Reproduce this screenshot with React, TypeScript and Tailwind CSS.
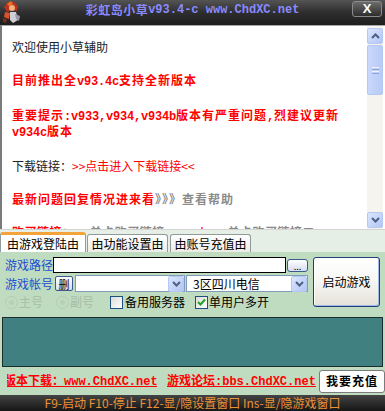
import React from "react";

function M({ children }: { children: React.ReactNode }) {
  return <span className="font-['Liberation_Mono',monospace] tracking-[-0.2px]">{children}</span>;
}

function Chevron({ up = false }: { up?: boolean }) {
  return (
    <svg width="9" height="6" viewBox="0 0 9 6">
      <path
        d={up ? "M1 5 L4.5 1.5 L8 5" : "M1 1 L4.5 4.5 L8 1"}
        fill="none"
        stroke="#4d6185"
        strokeWidth="2"
      />
    </svg>
  );
}

function XpArrowBtn({ up = false, cls = "" }: { up?: boolean; cls?: string }) {
  return (
    <div
      className={
        "w-[16px] h-[16px] rounded-[2px] border border-[#b5c8f3] bg-linear-to-br from-[#dbe5fd] to-[#b3c7f4] flex items-center justify-center " +
        cls
      }
    >
      <Chevron up={up} />
    </div>
  );
}

function Icon() {
  return (
    <svg width="22" height="24" viewBox="0 0 22 24">
      <path d="M3 7 L7 2 L13 2 L17 6 L16 11 L11 10 L6 12 Z" fill="#b8321e" />
      <path d="M6 4 L10 1 L12 4 L8 6 Z" fill="#e8702a" />
      <circle cx="11" cy="8" r="3" fill="#f3b07a" />
      <path d="M4 12 L9 13 L8 19 L3 17 Z" fill="#d9522a" />
      <path d="M9 12 L15 12 L17 20 L12 23 L9 20 Z" fill="#cfcfd8" />
      <path d="M14 14 L19 16 L18 21 L15 19 Z" fill="#9a9aa8" />
      <path d="M2 18 L6 19 L5 23 L2 22 Z" fill="#7a2a1a" />
    </svg>
  );
}

function CheckBox({ checked = false }: { checked?: boolean }) {
  return (
    <div className="w-[13px] h-[13px] border border-[#1c5180] bg-linear-to-br from-[#dcdcd7] to-white flex items-center justify-center">
      {checked && (
        <svg width="9" height="9" viewBox="0 0 9 9">
          <path d="M1 4 L3.5 6.5 L8 1.5" fill="none" stroke="#21a121" strokeWidth="2" />
        </svg>
      )}
    </div>
  );
}

function Radio() {
  return (
    <div className="w-[13px] h-[13px] rounded-full border border-[#b3ccb3] flex items-center justify-center">
      <div className="w-[5px] h-[5px] rounded-full bg-[#b8ceb8]" />
    </div>
  );
}

function Combo({ w, text = "" }: { w: string; text?: string }) {
  return (
    <div className={"h-[17px] bg-white border border-[#7f9db9] flex items-center " + w}>
      <span className="flex-1 pl-[6px] text-black whitespace-nowrap">{text}</span>
      <XpArrowBtn cls="w-[15px] h-[15px]" />
    </div>
  );
}

export default function App() {
  return (
    <div className="w-[385px] h-[411px] overflow-hidden flex flex-col font-['Noto_Sans_CJK_SC',sans-serif] text-[12px] leading-[14px] select-none">
      {/* Title bar */}
      <div className="h-[25px] shrink-0 flex bg-linear-to-b from-[#545454] via-[#2e2e2e] to-[#1e1e1e]">
        <div className="w-[33px] h-full flex items-start pl-[1px]">
          <Icon />
        </div>
        <div className="flex-1 flex justify-center items-start pt-[3px] text-[#8a8aff] font-bold whitespace-nowrap">
          <span className="tracking-[0.5px]">彩虹岛小草</span>
          <span className="font-['Liberation_Mono',monospace]">v93.4-c www.ChdXC.net</span>
        </div>
        <div className="w-[33px] h-full flex items-start pt-[1px]">
          <div className="w-[30px] h-[16px] rounded-[3px] border border-[#8a8a8a] bg-linear-to-b from-[#6c6c6c] to-[#2e2e2e] flex items-center justify-center text-white font-bold text-[13px] font-['Liberation_Sans',sans-serif]">
            X
          </div>
        </div>
      </div>

      {/* Content */}
      <div className="h-[204px] shrink-0 flex bg-white border-t border-t-[#a8a8a8] border-l-2 border-l-[#7a7a7a] overflow-hidden">
        <div className="flex-1 pl-[10px] pt-[14px] flex flex-col gap-[19px] whitespace-nowrap overflow-hidden">
          <div className="text-[#222]">欢迎使用小草辅助</div>
          <div className="text-[#ff0000] font-bold tracking-[1px]">
            目前推出全<M>v93.4c</M>支持全新版本
          </div>
          <div className="text-[#ff0000] font-bold tracking-[1px]">
            重要提示<M>:v933,v934,v934b</M>版本有严重问题<M>,</M>烈建议更新
            <br />
            <M>v934c</M>版本
          </div>
          <div className="text-[#222]">
            下载链接：<span className="text-[#ff0000]">&gt;&gt;点击进入下载链接&lt;&lt;</span>
          </div>
          <div className="font-bold tracking-[1px]">
            <span className="text-[#ff0000]">最新问题回复情况进来看</span>
            <span className="text-[#8a8a8a]">》》》查看帮助</span>
          </div>
          <div className="font-bold tracking-[0.5px]">
            <span className="text-[#ff0000]">购买链接：</span>
            <span className="text-[#8a8a8a]">&gt;&gt;单卡购买链接一&lt;&lt;</span>
            <span className="text-[#ff0000] mx-[8px]">|</span>
            <span className="text-[#8a8a8a]">&gt;&gt;单卡购买链接二&lt;&lt;</span>
          </div>
        </div>
        <div className="w-[16px] mr-[2px] bg-[#f5f4ef] flex flex-col pt-[2px] pb-[1px]">
          <XpArrowBtn up />
          <div className="mt-[1px] h-[50px] rounded-[2px] border border-[#b5c8f3] bg-linear-to-r from-[#c9d8fc] to-[#b8cbf6] flex flex-col items-center justify-center gap-[1px]">
            <div className="w-[7px] h-[1px] bg-[#eef3fe]" />
            <div className="w-[7px] h-[1px] bg-[#8ca4d8]" />
            <div className="w-[7px] h-[1px] bg-[#eef3fe]" />
            <div className="w-[7px] h-[1px] bg-[#8ca4d8]" />
          </div>
          <div className="flex-1" />
          <XpArrowBtn />
        </div>
      </div>

      {/* Tabs */}
      <div className="h-[23px] shrink-0 bg-[#e6efe6] flex items-end border-t border-t-[#d4d4d4]">
        <div className="h-[20px] w-[86px] bg-white border-x border-[#919b9c] border-t-[3px] border-t-[#f3a33a] rounded-t-[3px] flex items-center justify-center text-black whitespace-nowrap">
          由游戏登陆由
        </div>
        <div className="ml-[1px] h-[18px] w-[81px] bg-linear-to-b from-white to-[#ecebe6] border-x border-t border-[#919b9c] rounded-t-[3px] flex items-center justify-center text-black whitespace-nowrap">
          由功能设置由
        </div>
        <div className="ml-[2px] h-[18px] w-[81px] bg-linear-to-b from-white to-[#ecebe6] border-x border-t border-[#919b9c] rounded-t-[3px] flex items-center justify-center text-black whitespace-nowrap">
          由账号充值由
        </div>
      </div>

      {/* Panel */}
      <div className="h-[143px] shrink-0 bg-[#c0dcc0] flex flex-col">
        <div className="flex pt-[5px]">
          <div className="ml-[5px] w-[303px] flex flex-col">
            <div className="h-[16px] flex items-center">
              <span className="w-[48px] text-[#1a4fd0] whitespace-nowrap">游戏路径</span>
              <div className="w-[233px] h-[16px] bg-white border border-black" />
              <div className="ml-[1px] w-[21px] h-[13px] rounded-[3px] border border-[#3c5a8c] bg-linear-to-b from-white to-[#d6ddf0] flex items-end justify-center text-[9px] leading-[9px] text-black">
                ...
              </div>
            </div>
            <div className="mt-[2px] h-[17px] flex items-center">
              <span className="w-[48px] text-[#1a4fd0] whitespace-nowrap">游戏帐号</span>
              <div className="ml-[2px] w-[18px] h-[15px] rounded-[2px] border border-[#3c5a8c] bg-linear-to-b from-white to-[#d6ddf0] flex items-center justify-center text-[11px] text-black">
                删
              </div>
              <div className="ml-[2px]">
                <Combo w="w-[110px]" />
              </div>
              <div className="ml-[1px]">
                <Combo w="w-[122px]" text="3区四川电信" />
              </div>
            </div>
            <div className="mt-[3px] h-[14px] flex items-center whitespace-nowrap">
              <Radio />
              <span className="ml-[1px] w-[24px] text-[#a6bea6]">主号</span>
              <div className="ml-[13px]">
                <Radio />
              </div>
              <span className="ml-[1px] w-[24px] text-[#a6bea6]">副号</span>
              <div className="ml-[16px]">
                <CheckBox />
              </div>
              <span className="ml-[2px] w-[60px] text-black">备用服务器</span>
              <div className="ml-[10px]">
                <CheckBox checked />
              </div>
              <span className="ml-[1px] text-black">单用户多开</span>
            </div>
          </div>
          <div className="ml-[5px] w-[67px] h-[50px] rounded-[3px] border border-[#1f3f7a] bg-linear-to-b from-white via-[#f6f6f2] to-[#e4e2d8] shadow-[inset_-1px_-1px_0_#9fb6e6,inset_1px_1px_0_#ffffff] flex items-center justify-center text-black whitespace-nowrap">
            启动游戏
          </div>
        </div>
        <div className="mt-[8px] mx-[2px] h-[50px] bg-[#408080] border border-[#1c2c2c]" />
        <div className="h-[28px] flex items-center whitespace-nowrap">
          <div className="ml-[7px] w-[150px] overflow-hidden">
            <span className="block -ml-[3px] text-[#ff0000] font-bold underline">
              版本下载：<span className="font-['Liberation_Mono',monospace]">www.ChdXC.net</span>
            </span>
          </div>
          <div className="ml-[10px] w-[150px] overflow-hidden text-[#ff0000] font-bold underline">
            游戏论坛<span className="font-['Liberation_Mono',monospace]">:bbs.ChdXC.net</span>
          </div>
          <div className="ml-[2px] w-[66px] h-[23px] shrink-0 bg-white border border-[#7a7a7a] rounded-[3px] flex items-center justify-center font-bold tracking-[1px] text-black">
            我要充值
          </div>
        </div>
      </div>

      {/* Bottom bar */}
      <div className="h-[16px] shrink-0 bg-linear-to-b from-[#444444] to-[#161616] flex items-center justify-center text-[#ee9236] whitespace-nowrap">
        F9-启动 F10-停止 F12-显/隐设置窗口 Ins-显/隐游戏窗口
      </div>
    </div>
  );
}
